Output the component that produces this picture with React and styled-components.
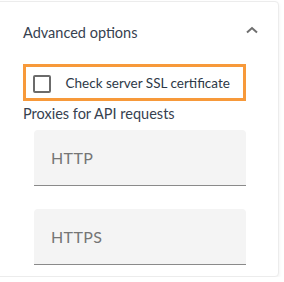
import React from "react";
import styled, { createGlobalStyle } from "styled-components";

const Global = createGlobalStyle`
  html, body { margin: 0; padding: 0; background: #fff; }
  body { font-family: Lato, "Liberation Sans", sans-serif; overflow: hidden; }
`;

const Card = styled.section`
  box-sizing: border-box;
  width: 287px;
  height: 276px;
  margin: 1px 0 0 -8px;
  background: #fff;
  border: 1px solid #ececec;
  border-radius: 4px;
  box-shadow: 0 2px 4px rgba(0, 0, 0, 0.06);
  padding: 0 0 0 30px;
`;

const Header = styled.div`
  display: flex;
  align-items: center;
  justify-content: space-between;
  height: 62px;
  padding-right: 20px;
`;

const Title = styled.span`
  font-size: 14.5px;
  color: #36414f;
  margin-top: -2px;
`;

const Chevron = styled.svg`
  width: 12px;
  height: 8px;
  margin-top: -6px;
`;

const Highlight = styled.label`
  box-sizing: border-box;
  display: flex;
  align-items: center;
  width: 223px;
  height: 37px;
  border: 3.5px solid #f7993a;
  padding-left: 6.5px;
  gap: 15px;
`;

const Box = styled.span`
  box-sizing: border-box;
  width: 18px;
  height: 18px;
  border: 2px solid #6b6b6b;
  border-radius: 2px;
  margin-top: 2px;
`;

const CheckText = styled.span`
  font-size: 13.5px;
  color: #2d3947;
`;

const Section = styled.div`
  font-size: 14.5px;
  color: #36414f;
  margin-top: 4px;
  line-height: 18px;
`;

const Fields = styled.div`
  display: flex;
  flex-direction: column;
  gap: 23px;
  margin: 7px 0 0 11px;
`;

const Field = styled.div`
  box-sizing: border-box;
  width: 212px;
  height: 56px;
  background: #f4f4f4;
  border-radius: 4px 4px 0 0;
  border-bottom: 1.5px solid #8a8a8a;
  display: flex;
  align-items: center;
  padding-left: 17px;
  font-size: 16px;
  letter-spacing: 0.4px;
  color: #757575;
`;

export default function App() {
  return (
    <>
      <Global />
      <Card>
        <Header>
          <Title>Advanced options</Title>
          <Chevron viewBox="0 0 12 8">
            <path d="M1 6.5 L6 2 L11 6.5" fill="none" stroke="#6f6f6f" strokeWidth="2" />
          </Chevron>
        </Header>
        <Highlight>
          <Box />
          <CheckText>Check server SSL certificate</CheckText>
        </Highlight>
        <Section>Proxies for API requests</Section>
        <Fields>
          <Field>HTTP</Field>
          <Field>HTTPS</Field>
        </Fields>
      </Card>
    </>
  );
}
